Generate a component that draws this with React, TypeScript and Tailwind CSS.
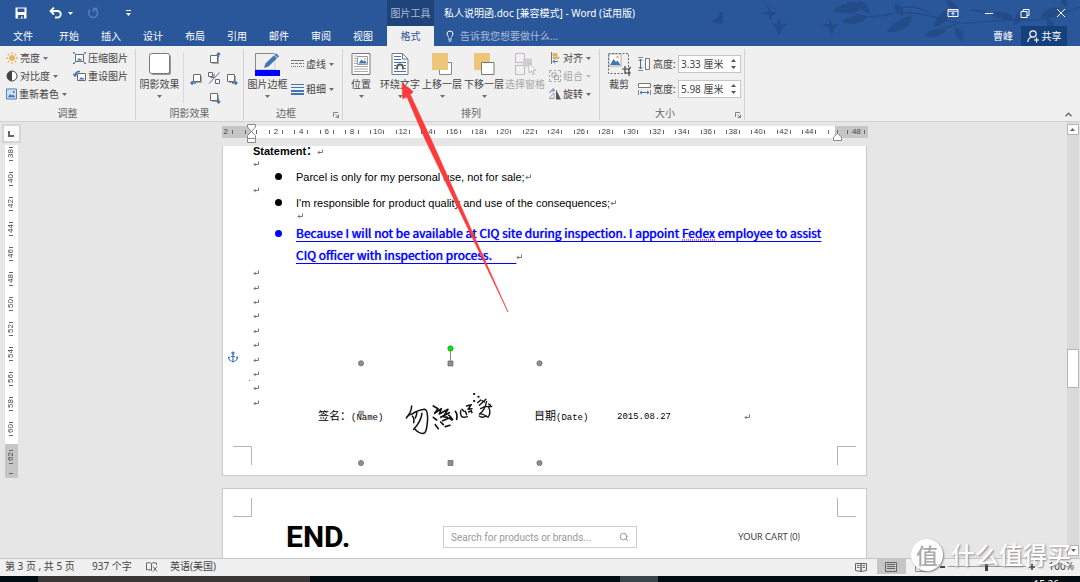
import type { ReactNode } from 'react';
import { Anchor, Lightbulb, Search } from 'lucide-react';

const BLUE = '#3f74b5';
const GRAY = '#6a6a6a';

const TABS = ['开始', '插入', '设计', '布局', '引用', '邮件', '审阅', '视图'];
const H_RULER = Array.from({ length: 22 }, (_, i) => (i + 1) * 2);
const V_RULER = Array.from({ length: 12 }, (_, i) => 38 + i * 2);

function Caret({ className = '' }: { className?: string }) {
  return (
    <svg viewBox="0 0 5 3" className={`h-[3px] w-[5px] shrink-0 ${className}`}>
      <path d="M0 0h5L2.5 3z" fill="currentColor" />
    </svg>
  );
}

function Group({
  label,
  launcher,
  className = '',
  children,
}: {
  label: string;
  launcher?: boolean;
  className?: string;
  children: ReactNode;
}) {
  return (
    <section
      className={`relative mt-[3px] mb-px flex shrink-0 flex-col border-r border-[#d2d2d2] ${className}`}
    >
      <div className="flex h-[58px]">{children}</div>
      <div className={`text-center text-[10px] leading-[13px] text-[#666] ${launcher ? 'pr-[14px]' : ''}`}>
        {label}
      </div>
      {launcher && (
        <button aria-label={`${label}设置`} className="absolute right-[3px] bottom-[2px] flex text-[#777]">
          <svg viewBox="0 0 6 6" className="size-[6px]" fill="none" stroke="currentColor">
            <path d="M.5 5V.5H5M2.5 2.5l3 3M5.5 2.5v3h-3" strokeWidth=".9" />
          </svg>
        </button>
      )}
    </section>
  );
}

function SmallButton({
  icon,
  label,
  caret = true,
  disabled,
}: {
  icon: ReactNode;
  label: string;
  caret?: boolean;
  disabled?: boolean;
}) {
  return (
    <button
      disabled={disabled}
      className={`flex h-[18px] items-center gap-[2px] whitespace-nowrap text-[10px] ${
        disabled ? 'text-[#a8a8a8]' : 'text-[#444]'
      }`}
    >
      {icon}
      {label}
      {caret && <Caret className="ml-px opacity-75" />}
    </button>
  );
}

function BigButton({
  icon,
  label,
  caret = true,
  disabled,
  className = 'w-[42px]',
}: {
  icon: ReactNode;
  label: string;
  caret?: boolean;
  disabled?: boolean;
  className?: string;
}) {
  return (
    <button
      disabled={disabled}
      className={`flex shrink-0 flex-col items-center whitespace-nowrap text-[10px] leading-[14px] ${
        disabled ? 'text-[#a8a8a8]' : 'text-[#444]'
      } ${className}`}
    >
      <span className="flex h-[28px] items-center pt-[2px]">{icon}</span>
      {label}
      {caret && <Caret className="mt-1 opacity-75" />}
    </button>
  );
}

/* ---------- ribbon icons ---------- */

const brightness = (
  <svg viewBox="0 0 12 12" className="size-3">
    <circle cx="6" cy="6" r="3" fill="#ecb564" />
    <path
      d="M6 0v2M6 10v2M0 6h2M10 6h2M1.8 1.8l1.3 1.3M8.9 8.9l1.3 1.3M1.8 10.2l1.3-1.3M8.9 3.1l1.3-1.3"
      stroke="#ecb564"
      strokeWidth="1.3"
    />
  </svg>
);

const contrast = (
  <svg viewBox="0 0 12 12" className="size-3">
    <circle cx="6" cy="6" r="5" fill="#fff" stroke="#444" />
    <path d="M6 1a5 5 0 0 0 0 10z" fill="#444" />
  </svg>
);

const recolor = (
  <svg viewBox="0 0 12 12" className="size-3">
    <path d="M.5.5h11v11H.5z" fill="#cfe0f2" stroke={BLUE} />
    <path d="M2 9.5 4.5 6l2 2 1.5-1.5 2.2 3z" fill={BLUE} />
    <circle cx="8.5" cy="3.7" r="1.1" fill={BLUE} />
  </svg>
);

const compress = (
  <svg viewBox="0 0 13 12" className="h-3 w-[13px]">
    <path d="M2.5 2.5h8v7h-8z" fill="#fff" stroke={GRAY} />
    <path d="M4 8.5 6 6l1.3 1.3L8 6.600l1.300 1.900z" fill={BLUE} />
    <path
      d="M0 0l2.500 2M0 2V0h2M13 0l-2.500 2M13 2V0h-2M0 12l2.500-2M0 10v2h2M13 12l-2.500-2M13 10v2h-2"
      stroke={BLUE}
      fill="none"
    />
  </svg>
);

const resetPicture = (
  <svg viewBox="0 0 13 12" className="h-3 w-[13px]">
    <path d="M4.500 3.500h8v7h-8z" fill="#fff" stroke={GRAY} />
    <path d="M6 9.500 8 7l1.200 1.200.8-.8 1.500 2.100z" fill={BLUE} />
    <path d="M2 5.500C2 2.500 4 1.500 7 1.500M0 3.800 2 6.300 4 3.800" stroke={BLUE} strokeWidth="1.300" fill="none" />
  </svg>
);

const shadowSquare = (
  <svg viewBox="0 0 24 24" className="size-6">
    <rect x="3" y="3" width="20" height="20" rx="2" fill="#999" />
    <rect x="1.500" y="1.500" width="20" height="20" rx="2" fill="#fff" stroke="#777" />
  </svg>
);

function Nudge({ arrow }: { arrow?: string }) {
  return (
    <svg viewBox="0 0 14 14" className="size-[14px]">
      <path d="M5 5h7v7H5z" fill="#aaa" />
      <path d="M3.500 3.500h7v7h-7z" fill="#fff" stroke={GRAY} />
      {arrow && <path d={arrow} stroke={BLUE} strokeWidth="1.400" fill="none" />}
    </svg>
  );
}

const shadowToggle = (
  <svg viewBox="0 0 14 14" className="size-[14px]" fill="#fff" stroke={GRAY}>
    <path d="M1.500 1.500h4v4h-4zM8.500 8.500h4v4h-4z" />
    <path d="M12.500 1.500 2 12.500" stroke={BLUE} />
    <path d="M7 3v3.500H3.500" fill="none" />
  </svg>
);

const pictureBorder = (
  <svg viewBox="0 0 27 24" className="h-6 w-[27px]">
    <path d="M1.500 18V1.500h19" fill="none" stroke="#888" />
    <path d="M21 5v12.500H2" fill="none" stroke="#ccc" />
    <path d="M10 16l1.500-4.500L22 1.200l3 3L14.500 14.500z" fill={BLUE} />
    <path d="M20.200 3l3 3" stroke="#f0f0f0" />
    <path d="M1 18h25v6H1z" fill="#0000fb" />
  </svg>
);

const dashes = (
  <svg viewBox="0 0 13 10" className="h-[10px] w-[13px]" stroke="#777">
    <path d="M0 1.500h13" />
    <path d="M0 4.500h13" strokeDasharray="3 1" />
    <path d="M0 7.500h13" strokeDasharray="1 1" />
  </svg>
);

const weights = (
  <svg viewBox="0 0 13 12" className="h-3 w-[13px]" fill={BLUE}>
    <path d="M0 1h13v1H0zM0 4h13v1H0zM0 7h13v2H0zM0 10h13v2H0z" />
  </svg>
);

const positionIcon = (
  <svg viewBox="0 0 20 24" className="h-6 w-5">
    <path d="M1 1.500h18v21H1z" fill="#fff" stroke="#777" />
    <path d="M3 4h3M3 6.500h3M3 9h3M3 11.500h3M3 14.500h14M3 17h14M3 19.500h14" stroke="#aaa" />
    <path d="M6.500 4.500h10v8h-10z" fill="#fff" stroke="#999" />
    <path d="M7.500 11.500 10.500 7.500l2 2 1.500-1.200 2 3.200z" fill={BLUE} />
    <circle cx="14" cy="6.700" r="1" fill="#ecb564" />
  </svg>
);

const wrapText = (
  <svg viewBox="0 0 18 24" className="h-6 w-[18px]">
    <path d="M1 1.500h10.500L17 7v15.500H1z" fill="#fff" stroke="#777" />
    <path d="M11.500 1.500V7H17" fill="none" stroke="#777" />
    <path d="M3 4.500h7M3 7.500h7M3 10.500h12M3 13.500h2M13 13.500h2M3 16.500h2M13 16.500h2M3 19.500h12" stroke={BLUE} />
    <path d="M6 17.500v-2a3 3 0 0 1 6 0v2" fill="none" stroke="#555" strokeWidth="1.800" />
  </svg>
);

const bringForward = (
  <svg viewBox="0 0 22 24" className="h-6 w-[22px]">
    <path d="M8.500 10.500h12v12h-12z" fill="#fff" stroke="#888" />
    <path d="M1 1h16v17H1z" fill="#edc67c" />
  </svg>
);

const sendBackward = (
  <svg viewBox="0 0 22 24" className="h-6 w-[22px]">
    <path d="M1 1h16v17H1z" fill="#edc67c" />
    <path d="M8.500 10.500h12.500v12H8.500z" fill="#fff" stroke="#777" />
  </svg>
);

const selectionPane = (
  <svg viewBox="0 0 22 24" className="h-6 w-[22px]" stroke="#bbb" fill="#f5f0f5">
    <path d="M1.500 1.500h9v9h-9zM1.500 13.500h9v9h-9z" />
    <path d="M9 6.500h9v8H9z" fill="#d2ccd2" stroke="none" />
    <path d="M15 11v10l2.300-2 1.700 3.800 1.500-.8-1.700-3.500h3z" fill="#fff" />
  </svg>
);

const alignIcon = (
  <svg viewBox="0 0 12 12" className="size-3">
    <path d="M2.500 0v12" stroke="#777" />
    <path d="M4 1.500h4v2.500H4zM4 5h6v1.500H4z" fill="#edb95e" stroke="#c99438" strokeWidth=".5" />
    <path d="M9 9.500H4M6 7.500l-2 2 2 2" stroke={BLUE} fill="none" />
  </svg>
);

const groupIcon = (
  <svg viewBox="0 0 12 12" className="size-3" fill="none" stroke="#a8a8a8">
    <path d="M.5 3V.5H3M9 .5h2.500V3M11.500 9v2.500H9M3 11.500H.5V9M5 .5h2M5 11.500h2M.5 5v2M11.500 5v2" />
    <path d="M3 3h4v4H3zM5.500 5.500h4v4h-4z" />
  </svg>
);

const rotateIcon = (
  <svg viewBox="0 0 12 12" className="size-3">
    <path d="M0 10.500h5V5z" fill="#fff" stroke="#999" />
    <path d="M7 1.500v10h5z" fill="#555" />
    <path d="M1 5c0-2 1.500-3 4-3M3.500.3 5.500 2l-2 1.700" stroke={BLUE} fill="none" />
  </svg>
);

const cropIcon = (
  <svg viewBox="0 0 24 24" className="size-6">
    <path d="M1.500 1.500h20v20h-20z" fill="none" stroke="#666" strokeDasharray="2 1.500" />
    <path d="M2 2h12v12H2z" fill="#fff" stroke="#888" strokeWidth=".7" />
    <path d="M3 13 6.500 7l2.500 3 1.500-1.500L13.500 13z" fill={BLUE} />
    <circle cx="10.500" cy="5" r="1.300" fill="#ecb564" />
    <path d="M15 17h7v7M18 14v7h6M22 17l2-2" fill="none" stroke="#444" strokeWidth="1.200" />
  </svg>
);

const heightIcon = (
  <svg viewBox="0 0 13 14" className="h-[14px] w-[13px]" fill="none">
    <path d="M0 .5h5M0 13.500h5" stroke="#888" />
    <path d="M2.500 2v10M.8 4l1.700-2 1.700 2M.8 10l1.700 2 1.700-2" stroke={BLUE} />
    <path d="M7.500 1.500h4v11h-4z" fill="#fff" stroke="#777" />
  </svg>
);

const widthIcon = (
  <svg viewBox="0 0 13 14" className="h-[14px] w-[13px]" fill="none">
    <path d="M.5 1.500h12v4H.5z" fill="#fff" stroke="#777" />
    <path d="M.5 8v5M12.500 8v5" stroke="#888" />
    <path d="M2 10.500h9M4 8.800l-2 1.700 2 1.700M9 8.800l2 1.700-2 1.700" stroke={BLUE} />
  </svg>
);

/* ---------- header ---------- */

function HeaderArt() {
  return (
    <svg viewBox="700 0 380 46" className="absolute top-0 right-0 h-[46px] w-[380px]" fill="#234b87">
      <path d="M720 11c-1 5-2 8-9 10 4 3 9 3 13 2-1-2-2-3-1-5 1-3 0-6-3-7zM766 3l3 8-9 2 9 2 1 6 2-5 5-3-6-2zM780 19l-4 5-5-2 5 7 3 7 3-7 6-6-7 2zM829 19v5l-7 1 7 3 3 8 2-7 5-5-6 1z" />
      <path d="M833 11c8-8 18-9 26 0-8 2-17 4-26 0zM846 3c9-3 14-1 18 6-8 2-13 0-18-6zM842 22c6-6 16-8 26-5-6 6-15 9-26 5zM869 14c-7-3-9-8-10-14 7 2 11 8 10 14z" />
      <path d="M887 32c6-9 14-14 25-17 0 10-9 18-25 17zM903 16c-8-2-9-7-8-13 7 3 10 7 8 13zM924 36c6-7 14-9 22-6-5 7-12 9-22 6zM934 27c1-9 6-15 15-18 1 9-4 16-15 18zM955 28c7 1 10 6 8 13-6-2-9-7-8-13zM946 0c7 1 11 4 12 10-7-1-11-4-12-10z" />
      <path d="M994 13c8-3 16-1 21 8-9 0-16-2-21-8zM1014 25c0-9 4-14 10-18 3 9 0 15-10 18zM1040 17c5-8 12-11 21-9-4 8-11 11-21 9zM1053 32c-6-4-8-9-6-14 7 3 9 8 6 14zM1066 7c-5-3-6-5-5-9 7 2 8 5 5 9z" />
      <path
        d="M840 10c15 3 25 10 45 5 20-5 38-2 60 5 25 8 55-3 80 0 22 2 40-8 55-13M930 13c-8-5-18-7-30-5M960 22c-6 4-14 6-20 6M1000 18c-8-4-18-8-30-8"
        fill="none"
        stroke="#234b87"
        strokeWidth="1.300"
      />
    </svg>
  );
}

function Header() {
  return (
    <header className="relative shrink-0 bg-[#2a579a] text-white">
      <HeaderArt />
      <div className="relative flex h-[26px] items-center">
        <button aria-label="保存" className="ml-[15px]">
          <svg viewBox="0 0 12 12" className="size-3">
            <path d="M.5.5h11v11H.5z" fill="#fff" />
            <path d="M2.500 1.500h7v3.500h-7zM3 8h6v3.500H7.500V9.500H6v2H3z" fill="#2a579a" />
          </svg>
        </button>
        <button aria-label="撤消" className="ml-[22px] flex items-center gap-[6px]">
          <svg viewBox="0 0 13 12" className="h-3 w-[13px]" fill="none" stroke="#fff" strokeWidth="1.800">
            <path d="M2 4h6.500a3.200 3.200 0 0 1 0 6.500H6M5 .5 1.500 4 5 7.500" />
          </svg>
          <Caret />
        </button>
        <button aria-label="恢复" disabled className="ml-[14px]">
          <svg viewBox="0 0 12 12" className="size-3" fill="none" stroke="#5a7eb5" strokeWidth="1.500">
            <path d="M7.500 1.800A4.500 4.500 0 1 1 3 2.800M6.500 5V1.500H10.500" />
          </svg>
        </button>
        <button aria-label="自定义快速访问工具栏" className="ml-[27px]">
          <svg viewBox="0 0 5 6" className="h-[6px] w-[5px]" fill="#fff">
            <path d="M0 0h5v1H0zM0 3h5L2.500 6z" />
          </svg>
        </button>
        <div className="ml-[256px] flex h-full w-[47px] items-center justify-center bg-[#20447a] text-[10px] text-[#a9bbd8]">
          图片工具
        </div>
        <h1 className="ml-[10px] whitespace-nowrap text-[10px]">私人说明函.doc [兼容模式] - Word (试用版)</h1>
        <div className="ml-auto flex pr-px">
          {[
            ['功能区显示选项', 'M1 2.500h10v7H1zM1 4.200h10M6 8.500V5.500M4.500 7 6 5.500 7.500 7'],
            ['最小化', 'M2 6.500h8'],
            ['还原', 'M2 4.500h6v6H2zM4 4.500v-2h6v6H8'],
            ['关闭', 'M2 2l8 8M10 2l-8 8'],
          ].map(([name, d]) => (
            <button key={name} aria-label={name} className="flex w-9 justify-center">
              <svg viewBox="0 0 12 12" className="size-3" fill="none" stroke="#fff">
                <path d={d} />
              </svg>
            </button>
          ))}
        </div>
      </div>
      <nav className="relative flex h-5 items-center text-[10px]">
        <button className="mr-[2px] w-[46px]">文件</button>
        {TABS.map((tab) => (
          <button key={tab} className="w-[42px]">
            {tab}
          </button>
        ))}
        <button className="ml-[3px] h-full w-[47px] bg-[#f0f0f0] text-[#2a579a]">格式</button>
        <label className="ml-[10px] flex items-center gap-1">
          <Lightbulb size={12} strokeWidth={2} />
          <input
            aria-label="告诉我您想要做什么"
            placeholder="告诉我您想要做什么..."
            className="w-[130px] bg-transparent outline-none placeholder:text-[#a9bbd8]"
          />
        </label>
        <span className="ml-auto">曹峰</span>
        <button className="mr-[13px] ml-[8px] flex h-full w-[46px] items-center justify-center gap-[3px] bg-[#16407b]">
          <svg viewBox="0 0 12 13" className="h-[13px] w-3" fill="none" stroke="#fff" strokeWidth="1.200">
            <circle cx="6" cy="4" r="3.200" />
            <path d="M.8 12c.3-3 2-4.500 3.700-5M7 10h5M9.500 7.500v5" />
          </svg>
          共享
        </button>
      </nav>
    </header>
  );
}

/* ---------- ribbon ---------- */

function SizeField({ id, icon, label, value }: { id: string; icon: ReactNode; label: string; value: string }) {
  return (
    <div className="flex items-center text-[10px] text-[#444]">
      {icon}
      <label htmlFor={id} className="ml-[2px] w-[25px] whitespace-nowrap">
        {label}:
      </label>
      <div className="flex h-[18px] w-[63px] items-center border border-[#c6c6c6] bg-white">
        <input id={id} defaultValue={value} className="w-[50px] min-w-0 pl-[2px] outline-none" />
        <div className="flex flex-col gap-1 pl-[2px] text-[#555]">
          <button aria-label={`增加${label}`} className="flex rotate-180">
            <Caret />
          </button>
          <button aria-label={`减少${label}`} className="flex">
            <Caret />
          </button>
        </div>
      </div>
    </div>
  );
}

function Ribbon() {
  return (
    <div className="flex h-[76px] shrink-0 border-b border-[#d0d0d0] bg-[#f0f0f0]">
      <Group label="调整" className="w-[136px]">
        <div className="flex w-[67px] flex-col pl-[6px]">
          <SmallButton icon={brightness} label="亮度" />
          <SmallButton icon={contrast} label="对比度" />
          <SmallButton icon={recolor} label="重新着色" />
        </div>
        <div className="flex flex-col pl-[6px]">
          <SmallButton icon={compress} label="压缩图片" caret={false} />
          <SmallButton icon={resetPicture} label="重设图片" caret={false} />
        </div>
      </Group>

      <Group label="阴影效果" className="w-[108px]">
        <BigButton icon={shadowSquare} label="阴影效果" className="w-[47px]" />
        <div className="my-[4px] mr-[4px] border-l border-[#d8d8d8]" />
        <div className="grid w-[51px] grid-cols-3 grid-rows-3 place-items-center">
          <button aria-label="上移阴影" className="col-start-2">
            <Nudge arrow="M11.500 5V1M9.800 2.700 11.500 1l1.700 1.700" />
          </button>
          <button aria-label="左移阴影" className="col-start-1 row-start-2">
            <Nudge arrow="M6 12H1M2.700 10.300 1 12l1.700 1.700" />
          </button>
          <button aria-label="设置阴影" className="col-start-2 row-start-2">
            {shadowToggle}
          </button>
          <button aria-label="右移阴影" className="col-start-3 row-start-2">
            <Nudge arrow="M8 12h5M11.300 10.300 13 12l-1.700 1.700" />
          </button>
          <button aria-label="下移阴影" className="col-start-2 row-start-3">
            <Nudge arrow="M11.500 9v4M9.800 11.300 11.500 13l1.700-1.700" />
          </button>
        </div>
      </Group>

      <Group label="边框" launcher className="w-[99px]">
        <BigButton icon={pictureBorder} label="图片边框" className="w-[47px]" />
        <div className="flex flex-col gap-[7px] pt-[6px]">
          <SmallButton icon={dashes} label="虚线" />
          <SmallButton icon={weights} label="粗细" />
        </div>
      </Group>

      <Group label="排列" className="w-[257px]">
        <BigButton icon={positionIcon} label="位置" className="w-[36px]" />
        <BigButton icon={wrapText} label="环绕文字" />
        <BigButton icon={bringForward} label="上移一层" />
        <BigButton icon={sendBackward} label="下移一层" />
        <BigButton icon={selectionPane} label="选择窗格" caret={false} disabled className="w-10" />
        <div className="flex flex-col pl-1">
          <SmallButton icon={alignIcon} label="对齐" />
          <SmallButton icon={groupIcon} label="组合" disabled />
          <SmallButton icon={rotateIcon} label="旋转" />
        </div>
      </Group>

      <Group label="大小" launcher className="w-[145px]">
        <BigButton icon={cropIcon} label="裁剪" caret={false} className="w-[38px]" />
        <div className="flex flex-col gap-[7px] pt-[6px]">
          <SizeField id="pic-height" icon={heightIcon} label="高度" value="3.33 厘米" />
          <SizeField id="pic-width" icon={widthIcon} label="宽度" value="5.98 厘米" />
        </div>
      </Group>

      <button aria-label="折叠功能区" className="mt-auto mr-2 mb-1 ml-auto text-[#666]">
        <svg viewBox="0 0 7 5" className="h-[5px] w-[7px]" fill="none" stroke="currentColor" strokeWidth="1.400">
          <path d="M.5 4.200 3.500 1.200l3 3" />
        </svg>
      </button>
    </div>
  );
}

/* ---------- rulers ---------- */

function RulerCell({ n }: { n: number }) {
  return (
    <span className="flex flex-[2] justify-center">
      <span className="flex w-[14px] items-center justify-between">
        <i className="h-1 w-px bg-[#666]" />
        {n}
        <i className="h-1 w-px bg-[#666]" />
      </span>
    </span>
  );
}

function VerticalRulerCell({ n }: { n: number }) {
  return (
    <span className="flex h-[25px] shrink-0 items-center">
      <span className="flex h-[14px] flex-col items-center justify-between">
        <i className="h-px w-1 bg-[#666]" />
        <span className="rotate-180 [writing-mode:vertical-rl]">{n}</span>
        <i className="h-px w-1 bg-[#666]" />
      </span>
    </span>
  );
}

function HorizontalRuler() {
  const tick = <i className="h-1 w-px bg-[#666]" />;
  return (
    <div className="relative flex h-3 w-full max-w-[646px] font-['Liberation_Sans',sans-serif] text-[8px] leading-3 text-[#444]">
      <div className="flex w-[29px] items-center gap-1 bg-[#c6c6c6] pl-[2px]">
        2{tick}
        <span className="ml-2 flex">{tick}</span>
      </div>
      <div className="flex flex-1 bg-white">
        <span className="flex flex-1 items-center justify-center">{tick}</span>
        {H_RULER.map((n) => (
          <RulerCell key={n} n={n} />
        ))}
        <span className="flex flex-1 items-center justify-center">{tick}</span>
      </div>
      <div className="flex w-[33px] items-center justify-between bg-[#c6c6c6] px-[2px]">
        {tick}
        <span className="ml-[6px] flex">{tick}</span>
        48{tick}
      </div>
      <svg viewBox="0 0 9 22" className="absolute -top-[2px] left-[25px] h-[22px] w-[9px]" fill="#fff" stroke="#888">
        <path d="M.5.5h8V3l-4 4.500L.5 3zM.5 14.500v-3l4-4 4 4v3zM.5 14.500h8v4h-8z" />
      </svg>
      <svg viewBox="0 0 9 8" className="absolute top-[7px] right-[26px] h-2 w-[9px]" fill="#fff" stroke="#888">
        <path d="M.5 7.500V4l4-3.500 4 3.500v3.500z" />
      </svg>
    </div>
  );
}

function VerticalRuler() {
  return (
    <div className="flex w-[22px] shrink-0 flex-col items-center font-['Liberation_Sans',sans-serif] text-[8px] leading-none text-[#444]">
      <button
        aria-label="制表符"
        className="mt-[2px] flex size-[19px] items-center justify-center border-2 border-[#d6d6d6] bg-[#fafafa]"
      >
        <i className="size-[6px] border-b-2 border-l-2 border-[#666]" />
      </button>
      <div className="mt-[2px] flex h-[299px] w-[13px] flex-col items-center justify-end overflow-hidden bg-white pb-[3px]">
        {V_RULER.map((n) => (
          <VerticalRulerCell key={n} n={n} />
        ))}
      </div>
      <div className="flex h-[34px] w-[13px] flex-col items-center bg-[#c6c6c6]">
        <VerticalRulerCell n={62} />
        <i className="mt-1 h-px w-1 bg-[#666]" />
      </div>
    </div>
  );
}

/* ---------- document ---------- */

function Mark() {
  return (
    <svg viewBox="0 0 6 6" className="inline-block size-[6px] shrink-0" fill="none" stroke="#777">
      <path d="M5.500.5v3H1M2.700 1.800 1 3.500l1.700 1.700" />
    </svg>
  );
}

function MarkRow({ className = 'h-[13px] pl-[30px]' }: { className?: string }) {
  return (
    <div className={`flex items-center ${className}`}>
      <Mark />
    </div>
  );
}

function Bullet({ children }: { children: ReactNode }) {
  return (
    <div className="flex h-[13px] items-center pl-[52px]">
      <i className="size-[7px] rounded-full bg-black" />
      <span className="ml-[14px] whitespace-nowrap">{children}</span>
      <Mark />
    </div>
  );
}

// Selection handles, signature strokes and crop marks of the first page
function PageOneMarks() {
  return (
    <svg viewBox="222 146 645 330" className="pointer-events-none absolute top-0 -left-px h-[330px] w-[645px]">
      <g fill="none" stroke="#b5b5b5">
        <path d="M233 446.500h18.500V465M856 446.500h-18.500V465" />
      </g>
      <path d="M450.500 350v12" stroke="#888" />
      <circle cx="450.500" cy="348.500" r="2.700" fill="#0be00b" stroke="#3d8c3d" strokeWidth=".7" />
      <g fill="#8f8f8f" stroke="#666" strokeWidth=".7">
        <circle cx="361" cy="363.300" r="2.600" />
        <circle cx="539.500" cy="363.300" r="2.600" />
        <circle cx="361" cy="463" r="2.600" />
        <circle cx="539.500" cy="463" r="2.600" />
        <path d="M448 361h5v5h-5zM448 460.500h5v5h-5z" />
        <path d="M358.500 411h5v4h-5zM537 411h5v4h-5z" fillOpacity=".8" strokeWidth=".4" />
      </g>
      <g
        transform="translate(220 330) scale(.3333)"
        fill="none"
        stroke="#111"
        strokeWidth="4.500"
        strokeLinecap="round"
        strokeLinejoin="round"
      >
        <path d="M575 228c0 12-6 24-16 36M560 262c6-8 12-10 16-10 10-6 24-13 38-14 9 2 8 14 9 28-1 18-2 34-8 42-8 5-20 0-30-10M577 258c4 4 6 10 4 20M590 246c2 6-1 12-4 18M606 250c-2 18-10 32-25 48" />
        <path d="M640 228l14 8-10 14 20-14-6 16 26-14-14 22 12 2M662 262l26-14M668 272l20-8 8 6M640 262l10 8M646 284l9 12M662 276l8 8M676 290l14-4M686 256c6 2 6 8 12 12M706 244c6 6 6 14 4 24" strokeWidth="5" />
        <path d="M722 242c-2 14 2 24 20 18M726 238l6 6M740 228l14-4-10 14 12-2M736 244l4 10M746 246l8-4 2 6" />
        <path d="M762 192h1M775 200h1M762 213h1" strokeWidth="6" />
        <path d="M773 218l9-8M778 226c6-6 12-10 20-18M786 212l8 4M782 236c12-8 20-8 33-6M800 214c-4 20-12 32-22 38 10-2 18 4 26 10 6-8 8-18 2-30M778 258c6 6 14 4 22 0M806 222l6 4" strokeWidth="4" />
      </g>
      <path d="M249.500 380v1" stroke="#888" />
    </svg>
  );
}

function DocumentPages() {
  return (
    <main className="flex min-w-0 flex-1 flex-col items-center overflow-hidden pt-1">
      <HorizontalRuler />
      <article className="relative mt-2 h-[330px] w-full max-w-[645px] shrink-0 border border-t-0 border-[#c9c9c9] bg-white font-['Liberation_Sans','Noto_Sans_CJK_SC',sans-serif] text-[11px] leading-[12px] text-black">
        <div className="flex h-[11px] items-center pl-[30px] leading-[9px] font-bold">
          Statement：
          <Mark />
        </div>
        <MarkRow />
        <Bullet>Parcel is only for my personal use, not for sale;</Bullet>
        <MarkRow />
        <Bullet>I'm responsible for product quality and use of the consequences;</Bullet>
        <MarkRow className="h-[13px] pl-[74px]" />
        <div className="flex pl-[52px] font-['Noto_Sans_CJK_SC',sans-serif] text-[12px] leading-[22px] text-[#0000ff]">
          <i className="mt-2 mr-[14px] size-[7px] shrink-0 rounded-full bg-[#0000ff]" />
          <p className="whitespace-nowrap underline decoration-[#0000ff] underline-offset-[3px] [text-shadow:0_0_1px_#0000ff]">
            Because I will not be available at CIQ site during inspection. I appoint{' '}
            <span className="relative">
              Fedex
              <svg className="absolute bottom-0 left-0 h-[2px] w-full" stroke="#f33">
                <path d="M0 1h40" strokeDasharray="1 1" strokeWidth="1.500" />
              </svg>
            </span>{' '}
            employee to assist
            <br />
            <span className="whitespace-pre">CIQ officer with inspection process.{'         '}</span>
            <Mark />
          </p>
        </div>
        <div className="flex h-[144px] flex-col">
          {Array.from({ length: 10 }, (_, i) => (
            <MarkRow key={i} className="flex-1 pl-[30px]" />
          ))}
        </div>
        <div className="flex h-[14px] items-center pl-[95px] font-['Liberation_Mono','Noto_Sans_CJK_SC',monospace] text-[9px] whitespace-nowrap">
          <span className="w-[216px]">
            <span className="text-[11px]">签名：</span>(Name)
          </span>
          <span className="w-[83px]">
            <span className="text-[11px]">日期</span>(Date)
          </span>
          <span className="w-[127px]">2015.08.27</span>
          <Mark />
        </div>
        <Anchor size={12} strokeWidth={2.4} color={BLUE} className="absolute top-[205px] left-1" />
        <PageOneMarks />
      </article>

      <article className="relative mt-3 w-full max-w-[645px] flex-1 border border-b-0 border-[#c9c9c9] bg-white">
        <svg
          viewBox="222 488 645 30"
          className="pointer-events-none absolute top-0 -left-px h-[30px] w-[645px]"
          fill="none"
          stroke="#b5b5b5"
        >
          <path d="M251.500 497v18.500H233M837.500 497v18.500H856" />
        </svg>
        <div className="mt-8 flex h-8 items-center pl-[63px]">
          <strong className="w-[157px] font-[Roboto] text-[30px] leading-8 font-bold text-black">END.</strong>
          <label className="flex h-[22px] w-[194px] items-center border border-[#cfcfcf] px-[7px]">
            <input
              aria-label="Search"
              placeholder="Search for products or brands..."
              className="min-w-0 flex-1 font-[Roboto] text-[10px] outline-none placeholder:text-[#999]"
            />
            <Search size={10} color="#888" />
          </label>
          <a href="#cart" className="ml-[101px] font-[Lato] text-[9px] whitespace-nowrap text-[#444]">
            YOUR CART (0)
          </a>
        </div>
      </article>
    </main>
  );
}

function ScrollBar() {
  return (
    <div className="mr-px flex w-3 shrink-0 flex-col bg-[#dadada] pt-[2px] text-[#666]">
      <button
        aria-label="向上滚动"
        className="flex h-[11px] rotate-180 items-center justify-center border border-[#b5b5b5] bg-white"
      >
        <Caret />
      </button>
      <div className="mt-[214px] h-[39px] border border-[#b5b5b5] bg-white" />
      <button
        aria-label="向下滚动"
        className="mt-auto mb-[2px] flex h-[11px] items-center justify-center border border-[#b5b5b5] bg-white"
      >
        <Caret />
      </button>
    </div>
  );
}

/* ---------- bottom bars ---------- */

function StatusBar() {
  return (
    <footer className="flex h-[18px] shrink-0 items-center border-t border-[#c6c6c6] bg-[#f0f0f0] pb-[2px] pl-[5px] text-[10px] whitespace-pre text-[#444]">
      <span className="w-[87px]">第 3 页 , 共 5 页</span>
      <span className="w-[54px]">937 个字</span>
      <svg viewBox="0 0 12 10" className="mr-3 h-[10px] w-3" fill="none" stroke="#666">
        <path d="M5.500 1.500v7C4 7.500 2 7.500.5 8V1c1.500-.5 4-.5 5 .5zM5.500 1.500C7 .5 8.500.5 10.500 1v2M7 4.500l4 5M11 4.500l-4 5" />
      </svg>
      <span>英语(美国)</span>
      <button aria-label="阅读视图" className="mr-[10px] ml-auto">
        <svg viewBox="0 0 12 10" className="h-[10px] w-3" fill="none" stroke="#666">
          <path d="M6 1.500v8L.5 8.500v-7zM6 1.500v8l5.500-1v-7zM2 3.500h2.500M2 5.500h2.500M7.500 3.500H10M7.500 5.500H10" />
        </svg>
      </button>
      <button aria-label="页面视图" className="flex h-full w-[29px] items-center justify-center bg-[#c6c6c6]">
        <svg viewBox="0 0 12 10" className="h-[10px] w-3" fill="none" stroke="#666">
          <path d="M.5.5h11v9H.5zM2 2.500h8M2 4.500h8M2 6.500h8" />
        </svg>
      </button>
      <button aria-label="Web 版式视图" className="ml-[9px]">
        <svg viewBox="0 0 12 10" className="h-[10px] w-3" fill="none" stroke="#888">
          <path d="M.5.500h11v9H.5zM.5 3h11M5 5h4v3H5z" />
        </svg>
      </button>
      <button aria-label="缩小" className="ml-[13px] h-[2px] w-[5px] bg-[#444]" />
      <input
        type="range"
        aria-label="显示比例"
        defaultValue={50}
        className="mx-[3px] h-[10px] w-[78px] appearance-none bg-[linear-gradient(#999,#999)] bg-[length:100%_1px] bg-center bg-no-repeat [&::-webkit-slider-thumb]:h-2 [&::-webkit-slider-thumb]:w-[3px] [&::-webkit-slider-thumb]:appearance-none [&::-webkit-slider-thumb]:bg-[#444]"
      />
      <button aria-label="放大" className="mr-[14px]">
        <svg viewBox="0 0 6 6" className="size-[6px]" stroke="#444" strokeWidth="1.600">
          <path d="M0 3h6M3 0v6" />
        </svg>
      </button>
      <span className="mr-[6px]">100%</span>
    </footer>
  );
}

function TaskBar() {
  return (
    <div className="flex h-[6px] shrink-0 overflow-hidden bg-[#020d12] text-[10px] leading-[10px] text-white">
      <i className="ml-[38px] w-[272px] bg-[#3b3636]" />
      <i className="ml-[310px] w-[38px] bg-[#38444a]" />
      <span className="mt-[3px] mr-[21px] ml-auto">15:26</span>
    </div>
  );
}

function Watermark() {
  return (
    <div className="pointer-events-none absolute right-[9px] bottom-[11px] flex items-center gap-2 font-medium whitespace-nowrap text-white">
      <span className="flex size-8 items-center justify-center rounded-full bg-white text-[22px] text-[#aaa] shadow-[1px_1px_2px_#888]">
        值
      </span>
      <span className="text-[24px] leading-8 [text-shadow:1px_1px_2px_#888]">什么值得买</span>
    </div>
  );
}

export default function App() {
  return (
    <div className="relative flex h-screen flex-col overflow-hidden bg-[#e6e6e6] font-['Noto_Sans','Noto_Sans_CJK_SC',sans-serif]">
      <Header />
      <Ribbon />
      <div className="flex min-h-0 flex-1">
        <VerticalRuler />
        <DocumentPages />
        <ScrollBar />
      </div>
      <StatusBar />
      <TaskBar />
      <svg
        viewBox="400 82 110 232"
        className="pointer-events-none absolute top-[82px] left-[400px] h-[232px] w-[110px]"
        fill="#fb3b3b"
        stroke="#fb3b3b"
        strokeWidth=".6"
      >
        <path d="M402 83l11.300 8.700-3 2.800L430.500 138 508 312 424.500 138 407 97l-4.300 1.700z" />
      </svg>
      <Watermark />
    </div>
  );
}
